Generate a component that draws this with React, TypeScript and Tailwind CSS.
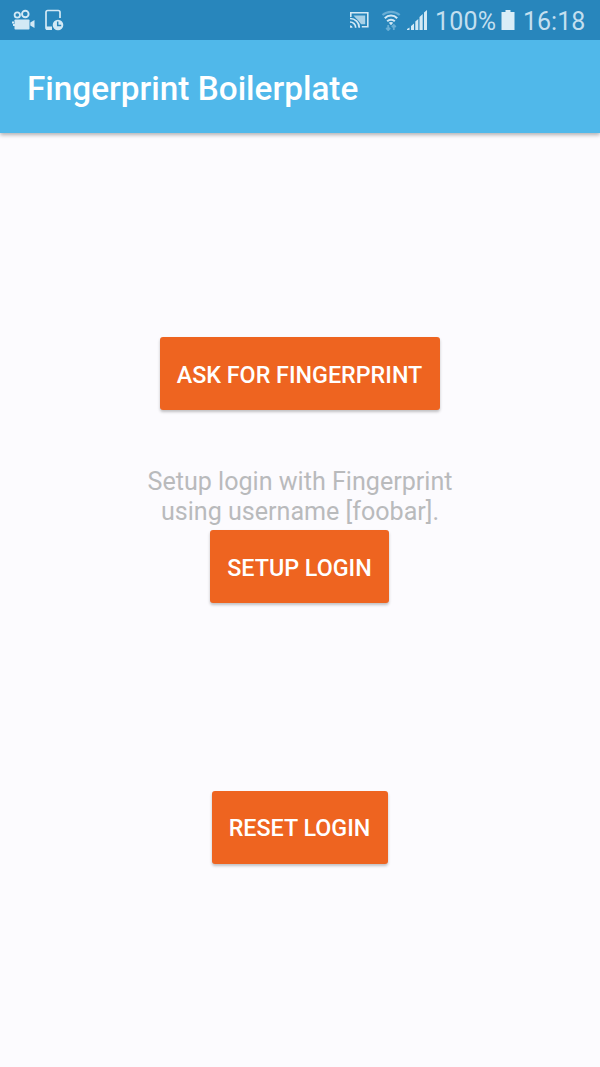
import type { ReactNode } from 'react';

function CameraIcon() {
  return (
    <svg width="25" height="22" viewBox="11 9 25 22" fill="#d3e9f5">
      <circle cx="17.3" cy="15" r="2.700" fill="none" stroke="#d3e9f5" strokeWidth="1.800" />
      <circle cx="25.3" cy="14" r="3.300" fill="none" stroke="#d3e9f5" strokeWidth="1.900" />
      <rect x="14.500" y="19.500" width="15" height="10" rx=".8" />
      <path d="M30.300 22.500l4.200-2.500v8L30.300 25.500z" />
      <path d="M12 21.500h2v2h-2zM13 24h2v2h-2z" />
    </svg>
  );
}

function DeviceClockIcon() {
  return (
    <svg width="20" height="22" viewBox="44 9 20 22">
      <path d="M51 29.200h-3.200a1.800 1.800 0 0 1-1.800-1.800V12.300a1.800 1.800 0 0 1 1.800-1.800h10.400a1.800 1.800 0 0 1 1.800 1.800V18" fill="none" stroke="#d3e9f5" strokeWidth="1.700" />
      <path d="M46 26.500h6V30h-4.500a1.500 1.500 0 0 1-1.500-1.500z" fill="#d3e9f5" />
      <circle cx="58" cy="25" r="5.300" fill="#d3e9f5" />
      <path d="M57.700 21.500V25.500h3.500" fill="none" stroke="#2886bc" strokeWidth="1.500" />
    </svg>
  );
}

function CastIcon() {
  return (
    <svg width="20" height="18" viewBox="349 11 20 18" fill="none" stroke="#d3e9f5">
      <path d="M350.800 17v-4.200h17v14h-6" strokeWidth="1.600" />
      <path d="M353.500 15.500h11.700v8.700h-4" fill="#d3e9f5" fillOpacity=".75" stroke="none" />
      <path d="M350 18.500c5.200 0 9.300 4 9.300 9.300M350 22c3.200 0 5.700 2.500 5.700 5.800" stroke="#2886bc" strokeWidth="3.200" />
      <path d="M350 18.500c5.200 0 9.300 4 9.300 9.300M350 22c3.200 0 5.700 2.500 5.700 5.800" strokeWidth="1.700" />
      <path d="M350 25.300a2.600 2.600 0 0 1 2.600 2.500H350z" fill="#d3e9f5" stroke="none" />
    </svg>
  );
}

function WifiIcon() {
  return (
    <svg width="20" height="21" viewBox="381 9 20 21" fill="none" stroke="#d3e9f5">
      <path d="M382.500 14c4.700-4.300 12.500-4.300 17.200 0" stroke="#69aed5" strokeWidth="2.200" />
      <path d="M384.800 17.200c3.400-3.500 9-3.500 12.400 0M387.200 20.200c2.100-2.100 5.500-2.100 7.600 0" strokeWidth="2" />
      <path d="M388.800 21.700l2.200 2.500 2.200-2.500c-1.200-1-3.200-1-4.400 0z" fill="#d3e9f5" stroke="none" />
      <path d="M388.200 24v5m-2-2l2 2 2-2M393.800 29v-5m-2 2l2-2 2 2" stroke="#69aed5" strokeWidth="1.800" />
    </svg>
  );
}

function SignalIcon() {
  return (
    <svg width="21" height="21" viewBox="407 10 21 21" fill="#d3e9f5">
      <path d="M407 30v-1l2.500-1.500V30zM411 30v-4l3-2.500V30zM415.300 30v-8.500l3-2.500v11zM419.500 30V17l3.200-3v16zM424 30V12.500l3-2.500v20z" />
    </svg>
  );
}

function BatteryIcon() {
  return (
    <svg width="14" height="20" viewBox="0 0 14 20" fill="#d9edf7">
      <path d="M4.500 0h5v2H13.500v18H.5V2h4z" />
    </svg>
  );
}

function StatusBar() {
  return (
    <div className="relative z-10 flex h-10 shrink-0 items-center bg-[#2886bc] pl-[11px] text-[25px] leading-none text-[#c3dfef]">
      <CameraIcon />
      <span className="ml-2"><DeviceClockIcon /></span>
      <span className="ml-[285px]"><CastIcon /></span>
      <span className="ml-3"><WifiIcon /></span>
      <span className="ml-1.5"><SignalIcon /></span>
      <span className="ml-[7px] w-[66px] pt-[3px] whitespace-nowrap tracking-[0.2px]">100%</span>
      <BatteryIcon />
      <span className="ml-2 pt-[3px] whitespace-nowrap">16:18</span>
    </div>
  );
}

function Button({ className, children }: { className: string; children: ReactNode }) {
  return (
    <button className={`${className} flex h-[73px] items-center justify-center rounded-[3px] bg-[#ee6420] text-[23.3px] leading-none font-medium whitespace-nowrap text-white shadow-[0_2px_3px_rgba(0,0,0,0.24)]`}>
      {children}
    </button>
  );
}

export default function App() {
  return (
    <div className="flex h-[1067px] w-[600px] flex-col overflow-hidden bg-[#fcfbfe] font-[Roboto,sans-serif]">
      <StatusBar />
      <header className="flex h-[93px] shrink-0 items-center bg-[#50b8ea] pt-[5px] pl-[27px] shadow-[0_2px_4px_rgba(0,0,0,0.3)]">
        <h1 className="text-[33.3px] leading-none font-medium text-white">Fingerprint Boilerplate</h1>
      </header>
      <main className="flex flex-1 flex-col items-center pt-[204px]">
        <Button className="w-[280px] pt-[4px] pr-px">ASK FOR FINGERPRINT</Button>
        <p className="mt-[57px] h-[63px] text-center text-[25.1px] leading-[29.5px] text-[#b9babc]">
          Setup login with Fingerprint
          <br />
          using username [foobar].
        </p>
        <Button className="mr-px w-[179px] pt-[4px]">SETUP LOGIN</Button>
        <Button className="mt-[188px] w-[176px] pt-[2px] pr-px">RESET LOGIN</Button>
      </main>
    </div>
  );
}
